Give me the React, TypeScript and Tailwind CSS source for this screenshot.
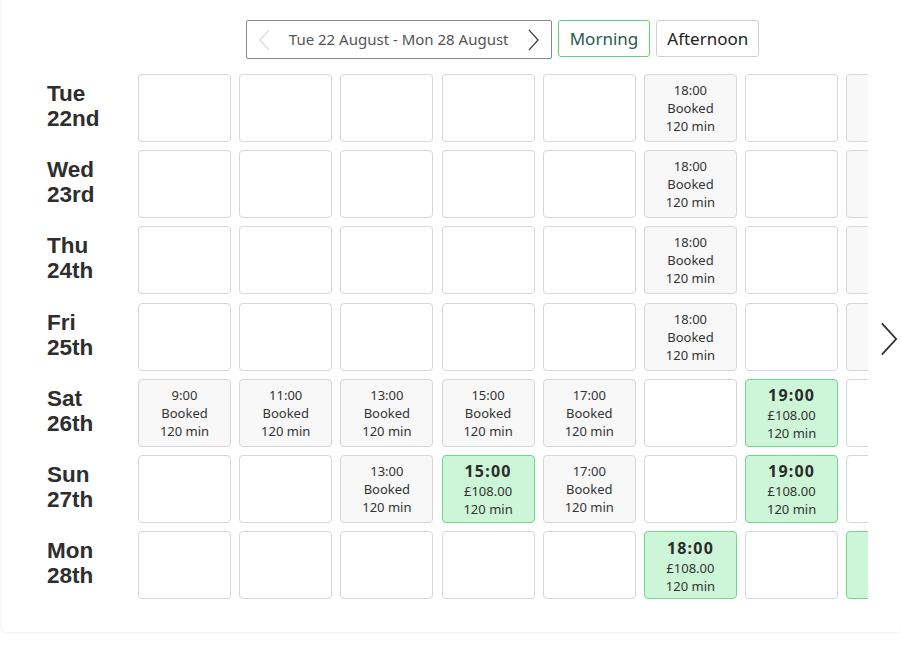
import React from 'react';

type Slot =
  | { kind: 'empty' }
  | { kind: 'booked'; time: string }
  | { kind: 'free'; time: string; price: string };

const E: Slot = { kind: 'empty' };
const b = (time: string): Slot => ({ kind: 'booked', time });
const f = (time: string): Slot => ({ kind: 'free', time, price: '£108.00' });

const days: { name: string; date: string; slots: Slot[] }[] = [
  { name: 'Tue', date: '22nd', slots: [E, E, E, E, E, b('18:00'), E, b('')] },
  { name: 'Wed', date: '23rd', slots: [E, E, E, E, E, b('18:00'), E, b('')] },
  { name: 'Thu', date: '24th', slots: [E, E, E, E, E, b('18:00'), E, b('')] },
  { name: 'Fri', date: '25th', slots: [E, E, E, E, E, b('18:00'), E, b('')] },
  { name: 'Sat', date: '26th', slots: [b('9:00'), b('11:00'), b('13:00'), b('15:00'), b('17:00'), E, f('19:00'), E] },
  { name: 'Sun', date: '27th', slots: [E, E, b('13:00'), f('15:00'), b('17:00'), E, f('19:00'), E] },
  { name: 'Mon', date: '28th', slots: [E, E, E, E, E, f('18:00'), E, f('')] },
];

const Chevron = ({ dir, className }: { dir: 'left' | 'right'; className?: string }) => (
  <svg viewBox="0 0 14 24" className={className} fill="none" stroke="currentColor" strokeWidth="1.3">
    {dir === 'left' ? <path d="M12 1 L2 12 L12 23" /> : <path d="M2 1 L12 12 L2 23" />}
  </svg>
);

function Cell({ slot }: { slot: Slot }) {
  if (slot.kind === 'empty') {
    return <div className="h-[68px] rounded-[4px] border border-[#d6d6d6] bg-white" />;
  }
  if (slot.kind === 'booked') {
    return (
      <div className="h-[68px] rounded-[4px] border border-[#d6d6d6] bg-[#f8f8f8] flex flex-col items-center justify-center text-[13px] leading-[18px] text-[#333]">
        {slot.time && (
          <>
            <span>{slot.time}</span>
            <span>Booked</span>
            <span>120 min</span>
          </>
        )}
      </div>
    );
  }
  return (
    <div className="h-[68px] rounded-[4px] border border-[#6fd98a] bg-[#cdf5d7] flex flex-col items-center justify-center text-[13px] leading-[18px] text-[#333]">
      {slot.time && (
        <>
          <span className="text-[16px] leading-[21px] font-bold tracking-[1.2px] text-[#2b2b2b] mt-[2px]">{slot.time}</span>
          <span>{slot.price}</span>
          <span>120 min</span>
        </>
      )}
    </div>
  );
}

export default function App() {
  return (
    <div className="min-h-[645px] bg-white pl-[1px] font-['Noto_Sans',sans-serif]">
      <div className="relative h-[632px] rounded-b-[4px] bg-white shadow-[0_0_3px_rgba(0,0,0,0.13)]">
        <div className="flex">
          <div className="w-[137px] shrink-0 pt-[74px] pl-[46px] flex flex-col gap-y-[8.2px]">
            {days.map((d) => (
              <div
                key={d.name}
                className="h-[68px] pt-[7px] font-['Liberation_Sans',Arial,sans-serif] font-bold text-[22.5px] leading-[25px] text-[#2e2e2e]"
              >
                <div>{d.name}</div>
                <div>{d.date}</div>
              </div>
            ))}
          </div>

          <div className="w-[730px] shrink-0 overflow-hidden">
            <div className="pt-[20px] flex justify-center gap-[6px] pr-[1px]">
              <div className="w-[306px] h-[39px] border border-[#8a8a8a] rounded-[2px] flex items-center justify-between px-[11px]">
                <Chevron dir="left" className="w-[13px] h-[22px] text-[#d8d8d8]" />
                <span className="text-[15px] text-[#555]">Tue 22 August - Mon 28 August</span>
                <Chevron dir="right" className="w-[13px] h-[22px] text-[#333]" />
              </div>
              <div className="h-[37px] px-[11px] border border-[#5cd57a] rounded-[3px] flex items-center text-[17px] text-[#2a5a4c]">
                Morning
              </div>
              <div className="h-[37px] px-[10px] border border-[#d0d0d0] rounded-[3px] flex items-center text-[17px] text-[#222]">
                Afternoon
              </div>
            </div>

            <div className="mt-[15px] grid grid-cols-[repeat(8,93px)] gap-x-[8.2px] gap-y-[8.2px] w-[802px]">
              {days.map((d) => d.slots.map((s, i) => <Cell key={d.name + i} slot={s} />))}
            </div>
          </div>

          <div className="flex-1 flex items-start pt-[321px] pl-[11px]">
            <Chevron dir="right" className="w-[20px] h-[36px] text-[#333]" />
          </div>
        </div>
      </div>
    </div>
  );
}
